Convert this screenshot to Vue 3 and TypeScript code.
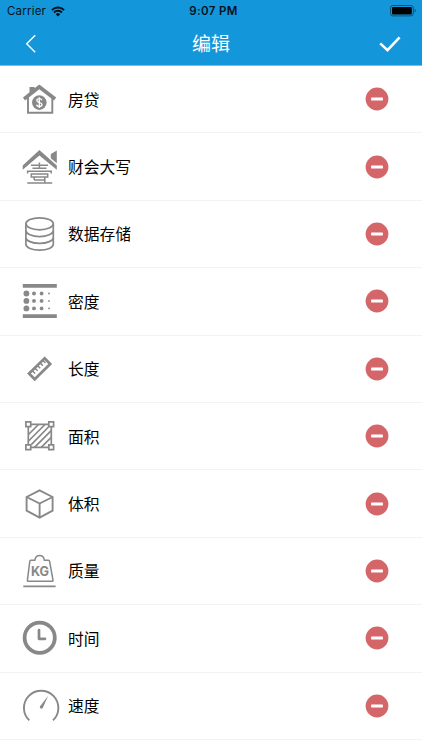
<script setup lang="ts">
interface Row {
  id: string
  label: string
}

const rows: Row[] = [
  { id: 'mortgage', label: '房贷' },
  { id: 'capital', label: '财会大写' },
  { id: 'storage', label: '数据存储' },
  { id: 'density', label: '密度' },
  { id: 'length', label: '长度' },
  { id: 'area', label: '面积' },
  { id: 'volume', label: '体积' },
  { id: 'mass', label: '质量' },
  { id: 'time', label: '时间' },
  { id: 'speed', label: '速度' },
]

const dotColumns = [
  { x: 6.4, r: 2.9 },
  { x: 14, r: 1.95 },
  { x: 21.6, r: 1.9 },
  { x: 29, r: 0.9 },
]
const dotLines = [12.5, 19.9, 27.4]
</script>

<template>
  <div class="screen">
    <header class="header">
      <div class="status">
        <div class="carrier">
          <span>Carrier</span>
          <svg class="wifi" viewBox="0 0 14 11">
            <path d="M0.9 4.1a8.6 8.6 0 0 1 12.2 0" />
            <path d="M3 6.5a5.7 5.7 0 0 1 8 0" />
            <path class="solid" d="M7 10.6L4.7 8.2a3.3 3.3 0 0 1 4.6 0z" />
          </svg>
        </div>
        <div class="clock">9:07 PM</div>
        <div class="power">
          <svg class="battery" viewBox="0 0 27 12">
            <rect class="shell" x="0.5" y="0.5" width="22.8" height="10.4" rx="2.4" />
            <rect x="2" y="2" width="19.8" height="7.4" rx="1" />
            <path class="tip" d="M24.6 3.8c1.6.6 1.6 3.2 0 3.8z" />
          </svg>
        </div>
      </div>
      <nav class="nav">
        <svg class="back" viewBox="0 0 12 20"><path d="M10.2 1.3L1.7 9.7l8.5 8.5" /></svg>
        <h1 class="title">编辑</h1>
        <svg class="done" viewBox="0 0 24 18"><path d="M2.2 8.4l7.3 6.8L21.6 2.4" /></svg>
      </nav>
    </header>

    <ul class="list">
      <li v-for="row in rows" :key="row.id" class="row">
        <svg class="icon" viewBox="0 0 40 40">
          <template v-if="row.id === 'mortgage'">
            <path class="w18" d="M8 17v16.8h24.3V17" />
            <path class="fill" d="M19.3 5.4L36.2 18.4l-2.2 3.2L19.3 10.3 5 21.5l-2-3.1 6.5-5.1V8h5v1.3z" />
            <circle class="fill" cx="19.3" cy="23.6" r="7.3" />
            <path class="cut" d="M22 21.2c-.6-1.1-1.5-1.5-2.7-1.5-1.5 0-2.5.7-2.5 1.9 0 2.7 5.2 1.2 5.2 4 0 1.2-1.1 2-2.7 2-1.3 0-2.4-.6-2.8-1.8M19.3 18.2v10.8" />
          </template>
          <template v-else-if="row.id === 'capital'">
            <path class="fill" d="M19.4 3L36.8 18.5v4.3L19.4 8.4 2.7 22.8v-4.3zM30.8 7l6-3.6v12.8l-6-5z" />
            <path class="w15" d="M19.4 15.6v5M11 18.3h17M12.5 21.3h14M7.6 26.6v-2.4h23.6v2.4M11.3 27.1h16.4v2.9H11.3zM14.2 32.9h10.6M14.2 30v2.9M24.8 30v5.6M7.3 36h24.9" />
          </template>
          <template v-else-if="row.id === 'storage'">
            <ellipse class="w17" cx="19.6" cy="9.8" rx="13.7" ry="6" />
            <path class="w17" d="M5.9 9.8v20.4c0 3.3 6.1 6 13.7 6s13.7-2.7 13.7-6V9.8M5.9 16.6c0 3.3 6.1 6 13.7 6s13.7-2.7 13.7-6M5.9 23.4c0 3.3 6.1 6 13.7 6s13.7-2.7 13.7-6" />
          </template>
          <template v-else-if="row.id === 'density'">
            <path class="fill" d="M2.8 2.9h34v3.8h-34zM2.8 33.2h34V37h-34z" />
            <template v-for="y in dotLines" :key="y">
              <circle v-for="c in dotColumns" :key="c.x" class="fill" :cx="c.x" :cy="y" :r="c.r" />
            </template>
          </template>
          <template v-else-if="row.id === 'length'">
            <path class="w27" d="M24.6 9.3l5.6 5.7-15.5 15.3L9 24.5z" />
            <path class="w15" d="M12.3 21.7l2.7 2.7M14.9 19.1l2.7 2.7M17.5 16.5l2.7 2.7M20.1 13.9l2.7 2.7M22.7 11.3l2.7 2.7" />
          </template>
          <template v-else-if="row.id === 'area'">
            <path class="w17" d="M11 8.3h17.4M11 31.4h17.4M8.3 11v17.6M31.3 11v17.6" />
            <path class="w17" d="M8.5 18.5L18.5 8.5M8.5 25L25 8.5M11.3 28.6L28.5 11M14.5 31.3L31.2 14.6M21.2 31.3l10-10" />
            <path class="w17" d="M5.9 5.9h4.8v4.8H5.9zM28.8 5.9h4.8v4.8h-4.8zM5.9 28.9h4.8v4.8H5.9zM28.8 28.9h4.8v4.8h-4.8z" />
          </template>
          <template v-else-if="row.id === 'volume'">
            <path class="w18" d="M19.6 6.3l13 6.7v13.7l-13 6.9-13-6.9V13zM6.6 13l13 6.5 13-6.5M19.6 19.5v14" />
          </template>
          <template v-else-if="row.id === 'mass'">
            <path class="w15" d="M10.7 9.3h4.1c.5-3 2.3-4.7 4.8-4.7s4.3 1.7 4.8 4.7h4.1c.8 0 1 .4 1.1 1l3.4 18.8c.1.7-.2 1.1-.9 1.1H8.3c-.7 0-1-.4-.9-1.1L9.8 10.3c.1-.6.3-1 .9-1z" />
            <text class="kg" x="20" y="24.6">KG</text>
            <path class="w17" d="M3.3 35.3h32.3" />
          </template>
          <template v-else-if="row.id === 'time'">
            <circle class="w38" cx="19.7" cy="19.7" r="15.1" />
            <path class="w27 round" d="M19 12.2v8.6h6" />
          </template>
          <template v-else>
            <path class="w18" d="M9.3 34.4a17.2 17.2 0 1 1 23.7 0" />
            <path class="fill" d="M28.2 9.8L22.7 22c-.9 1.5-3.4.2-2.8-1.4z" />
          </template>
        </svg>
        <span class="label">{{ row.label }}</span>
        <button class="remove" type="button">
          <svg viewBox="0 0 24 24">
            <circle cx="12" cy="12" r="11.4" />
            <rect x="6.1" y="10.5" width="11.8" height="3" rx="0.6" />
          </svg>
        </button>
      </li>
    </ul>
  </div>
</template>

<style>
body {
  background: #fff;
  overflow: hidden;
}
</style>

<style scoped>
.screen {
  height: 750px;
  overflow: hidden;
  background: #fff;
  font-family: 'Noto Sans CJK SC', sans-serif;
}
.header {
  box-sizing: border-box;
  height: 66px;
  background: #1496db;
  border-bottom: 1px solid #72bfe8;
}
.status {
  display: grid;
  grid-template-columns: 1fr auto 1fr;
  align-items: center;
  height: 22px;
  padding: 0 5px 0 7px;
  font-family: Inter, sans-serif;
  font-size: 11.5px;
  color: #04121d;
}
.carrier {
  display: flex;
  align-items: center;
  gap: 5px;
  letter-spacing: 0.2px;
}
.wifi {
  width: 14px;
  height: 11px;
  fill: none;
  stroke: #04121d;
  stroke-width: 2;
}
.wifi .solid {
  fill: #04121d;
  stroke: none;
}
.clock {
  padding-left: 3px;
  font-weight: 600;
  letter-spacing: 0.4px;
}
.power {
  display: flex;
  justify-content: flex-end;
}
.battery {
  width: 27px;
  height: 12px;
  fill: #000;
}
.battery .shell {
  fill: none;
  stroke: #0c5178;
}
.battery .tip {
  fill: #0c5178;
}
.nav {
  display: grid;
  grid-template-columns: 1fr auto 1fr;
  align-items: center;
  height: 43px;
  padding: 0 20px;
}
.nav svg {
  fill: none;
  stroke: #fff;
}
.back {
  width: 12px;
  height: 20px;
  margin-left: 5px;
  stroke-width: 1.4;
}
.title {
  margin: 0;
  padding-bottom: 2px;
  font-size: 19px;
  line-height: 28px;
  font-weight: 400;
  color: #fff;
}
.done {
  justify-self: end;
  width: 24px;
  height: 18px;
  stroke-width: 2.6;
}
.list {
  margin: 0;
  padding: 0;
  list-style: none;
}
.row {
  box-sizing: border-box;
  display: flex;
  align-items: center;
  height: 67.4px;
  padding: 0 33px 0 20px;
  border-bottom: 1px solid #f3f3f3;
}
.icon {
  flex: none;
  width: 40px;
  height: 40px;
  overflow: visible;
  fill: none;
  stroke: #888;
}
.fill {
  fill: #888;
  stroke: none;
}
.cut {
  stroke: #fff;
  stroke-width: 1.3;
}
.w15 {
  stroke-width: 1.5;
}
.w17 {
  stroke-width: 1.7;
}
.w18 {
  stroke-width: 1.9;
}
.w27 {
  stroke-width: 2.7;
}
.w38 {
  stroke-width: 3.8;
}
.round {
  stroke-linecap: round;
  stroke-linejoin: round;
}
.kg {
  fill: #888;
  stroke: none;
  font: 700 12.7px Inter, sans-serif;
  text-anchor: middle;
}
.label {
  flex: 1;
  margin-left: 8px;
  font-size: 15.75px;
  line-height: 24px;
  padding-top: 1px;
  color: #000;
}
.remove {
  display: flex;
  padding: 0;
  border: 0;
  background: none;
}
.remove svg {
  width: 24px;
  height: 24px;
}
.remove circle {
  fill: #d46669;
}
.remove rect {
  fill: #fff;
}
</style>
